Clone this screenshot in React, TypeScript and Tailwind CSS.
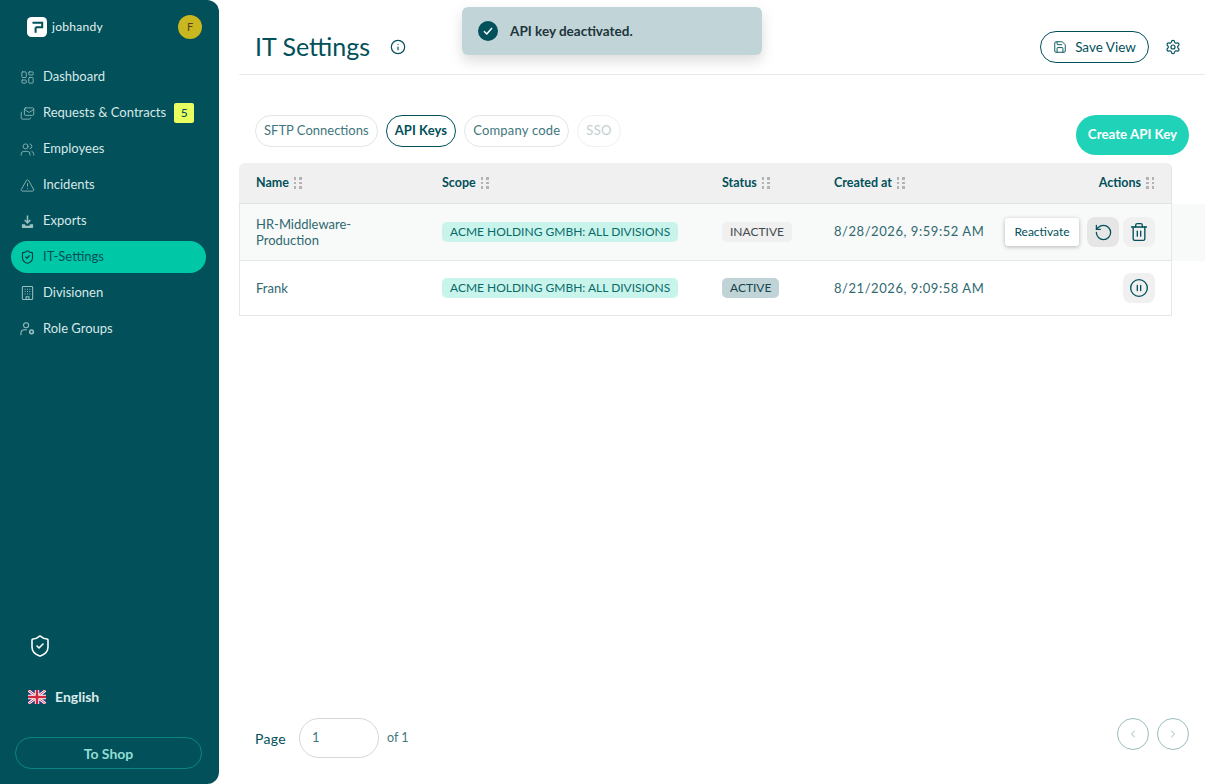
import { ReactNode } from "react";
import {
  ChevronLeft,
  ChevronRight,
  CirclePause,
  Info,
  LayoutDashboard,
  Mails,
  RotateCcw,
  Save,
  Settings,
  ShieldCheck,
  Trash2,
  TriangleAlert,
  Users,
} from "lucide-react";

function ExportIcon() {
  return (
    <svg width="15" height="15" viewBox="0 0 16 16" fill="none">
      <path d="M8 1.5v7.5M5 6.5 8 9.5l3-3" stroke="currentColor" strokeWidth="1.6" />
      <path d="M2 11h3.2l1 1.5h3.6l1-1.5H14v3.2a.8.8 0 0 1-.8.8H2.8a.8.8 0 0 1-.8-.8z" fill="currentColor" />
    </svg>
  );
}

function RoleIcon() {
  return (
    <svg width="16" height="16" viewBox="0 0 16 16" fill="none" stroke="currentColor" strokeWidth="1.1">
      <circle cx="6.5" cy="4" r="2.7" />
      <path d="M1 14v-1.5c0-2.2 1.8-3.7 4-3.7h2" strokeLinecap="round" />
      <circle cx="12.3" cy="11" r="2" strokeWidth="1.6" />
    </svg>
  );
}

function BuildingIcon() {
  return (
    <svg width="16" height="16" viewBox="0 0 16 16" fill="none" stroke="currentColor">
      <rect x="2.5" y="1" width="11" height="14" rx="1" strokeWidth="1.1" />
      <path
        d="M5 4h1M7.5 4h1M10 4h1M5 6.5h1M7.5 6.5h1M10 6.5h1M5 9h1M7.5 9h1M10 9h1"
        strokeWidth="1.1"
      />
      <path d="M6.5 15v-3h3v3" strokeWidth="1.1" />
    </svg>
  );
}

function Logo() {
  return (
    <svg width="20" height="20" viewBox="0 0 20 20" fill="none">
      <rect width="20" height="20" rx="4.5" fill="#fff" />
      <path d="M5.5 5.8H15.2V10.2H8.6M8.6 10.2V15.8" stroke="#01505a" strokeWidth="2" />
    </svg>
  );
}

function UkFlag() {
  return (
    <svg width="18" height="14" viewBox="0 0 18 14" className="shrink-0">
      <rect width="18" height="14" fill="#2b3a80" />
      <path d="M0 0 18 14M18 0 0 14" stroke="#fff" strokeWidth="2.6" />
      <path d="M0 0 18 14M18 0 0 14" stroke="#cf2a3f" strokeWidth="0.9" />
      <path d="M9 0v14M0 7h18" stroke="#fff" strokeWidth="4.4" />
      <path d="M9 0v14M0 7h18" stroke="#cf2a3f" strokeWidth="2.6" />
    </svg>
  );
}

function GripDots() {
  return (
    <span className="grid grid-cols-2 gap-x-[3px] gap-y-[2px]">
      {[0, 1, 2, 3, 4, 5].map((i) => (
        <span key={i} className="w-[2.5px] h-[2.5px] bg-[#b3b3b3]" />
      ))}
    </span>
  );
}

const navItems = [
  { label: "Dashboard", icon: <LayoutDashboard size={17} strokeWidth={1.3} /> },
  { label: "Requests & Contracts", icon: <Mails size={17} strokeWidth={1.3} />, badge: "5" },
  { label: "Employees", icon: <Users size={17} strokeWidth={1.3} /> },
  { label: "Incidents", icon: <TriangleAlert size={17} strokeWidth={1.3} /> },
  { label: "Exports", icon: <ExportIcon /> },
  { label: "IT-Settings", icon: <ShieldCheck size={16} strokeWidth={1.8} />, active: true },
  { label: "Divisionen", icon: <BuildingIcon /> },
  { label: "Role Groups", icon: <RoleIcon /> },
];

function Sidebar() {
  return (
    <aside className="w-[219px] h-[784px] shrink-0 bg-[#01505a] rounded-r-xl flex flex-col pb-[15px]">
      <div className="flex items-center justify-between pl-[27px] pr-[17px] pt-[15px] h-[24px] box-content">
        <div className="flex items-center gap-[5px]">
          <Logo />
          <span className="text-[12px] text-[#e6f0f0] tracking-[0.3px]">jobhandy</span>
        </div>
        <span className="w-6 h-6 rounded-full bg-[#c8b71f] text-[#5b3a1e] text-[11px] flex items-center justify-center">
          F
        </span>
      </div>
      <nav className="flex flex-col gap-1 px-[11px] pt-[22px]">
        {navItems.map((item) => (
          <div
            key={item.label}
            className={
              item.active
                ? "flex items-center h-8 rounded-full bg-[#00c7a6] pl-[9px] gap-[8px] w-[195px] whitespace-nowrap"
                : "flex items-center h-8 pl-[9px] gap-[8px] w-[195px] whitespace-nowrap"
            }
          >
            <span className={item.active ? "w-[15px] flex justify-center text-[#043c44]" : "w-[15px] flex justify-center text-[#9cc0c2]"}>
              {item.icon}
            </span>
            <span className={item.active ? "text-[13px] text-[#01505a]" : "text-[13px] text-[#d8e8e8]"}>{item.label}</span>
            {item.badge && (
              <span className="w-5 h-5 rounded-[2px] bg-[#e9ff5f] text-[#01505a] text-[12px] font-medium flex items-center justify-center">
                {item.badge}
              </span>
            )}
          </div>
        ))}
      </nav>
      <div className="mt-auto flex flex-col">
        <div className="pl-[28px]">
          <ShieldCheck size={24} strokeWidth={1.6} className="text-white" />
        </div>
        <div className="flex items-center gap-[9px] pl-[28px] mt-[28px]">
          <UkFlag />
          <span className="text-[14px] font-bold text-[#dcebeb]">English</span>
        </div>
        <div className="mx-[15px] mt-[30px] w-[187px] h-[32px] rounded-full border border-[#0a8585] flex items-center justify-center text-[14px] font-bold text-[#93ddd2]">
          To Shop
        </div>
      </div>
    </aside>
  );
}

function Tab({ children, state, className = "" }: { children: ReactNode; state?: "active" | "disabled"; className?: string }) {
  const cls =
    state === "active"
      ? "border-[#01505a] text-[#01505a] font-bold"
      : state === "disabled"
        ? "border-[#f0f0f0] text-[#bfd0d2]"
        : "border-[#e3e6e6] text-[#3f767d]";
  return <div className={"h-8 px-2 rounded-full border flex items-center text-[13px] " + cls + " " + className}>{children}</div>;
}

function HeadCell({ children, className }: { children: ReactNode; className: string }) {
  return (
    <div className={"flex items-center gap-[5px] text-[12.5px] font-bold text-[#01505a] " + className}>
      {children}
      <GripDots />
    </div>
  );
}

function Pill({ children, className }: { children: ReactNode; className: string }) {
  return (
    <span className={"flex items-center w-fit h-5 px-2 rounded-[5px] text-[12px] whitespace-nowrap " + className}>
      {children}
    </span>
  );
}

function IconButton({ children, className }: { children: ReactNode; className: string }) {
  return <button className={"w-8 h-[30px] rounded-lg flex items-center justify-center text-[#01505a] " + className}>{children}</button>;
}

function ApiTable() {
  return (
    <div className="w-[933px] mt-[8px]">
      <div className="flex items-center h-[41px] bg-[#f0f0f0] rounded-t-md border-b border-r border-[#e2e4e4] pl-[17px] pr-[17px]">
        <HeadCell className="w-[186px]">Name</HeadCell>
        <HeadCell className="w-[280px]">Scope</HeadCell>
        <HeadCell className="w-[112px]">Status</HeadCell>
        <HeadCell className="w-[120px]">Created at</HeadCell>
        <HeadCell className="flex-1 justify-end">Actions</HeadCell>
      </div>
      <div className="w-[966px] bg-[#f8faf9]">
        <div className="w-[933px] h-[57px] flex items-center px-[16px] border-x border-b border-[#e6e8e8]">
          <div className="w-[186px] text-[13px] leading-4 text-[#30686f] pr-[60px]">HR-Middleware-Production</div>
          <div className="w-[280px]">
            <Pill className="bg-[#c8f4ec] text-[#0a6a6a]">ACME HOLDING GMBH: ALL DIVISIONS</Pill>
          </div>
          <div className="w-[112px]">
            <Pill className="bg-[#f0f0f0] text-[#424b4b]">INACTIVE</Pill>
          </div>
          <div className="text-[13px] tracking-[0.55px] text-[#30686f] whitespace-nowrap">8/28/2026, 9:59:52 AM</div>
          <div className="flex items-center gap-1 ml-auto relative">
            <IconButton className="bg-[#e6e6e6]">
              <RotateCcw size={19} strokeWidth={1.6} />
            </IconButton>
            <IconButton className="bg-[#f0f0f0]">
              <Trash2 size={20} strokeWidth={1.6} />
            </IconButton>
            <div className="absolute right-[76px] top-[1px] h-7 w-[74px] rounded-[3px] bg-white shadow-[0_1px_4px_rgba(0,0,0,0.28)] text-[#01505a] text-[12px] flex items-center justify-center">
              Reactivate
            </div>
          </div>
        </div>
      </div>
      <div className="h-[55px] flex items-center px-[16px] border-x border-b border-[#e6e8e8]">
        <div className="w-[186px] pt-[1px] text-[13px] text-[#30686f]">Frank</div>
        <div className="w-[280px]">
          <Pill className="bg-[#c8f4ec] text-[#0a6a6a]">ACME HOLDING GMBH: ALL DIVISIONS</Pill>
        </div>
        <div className="w-[112px]">
          <Pill className="bg-[#c0d4d8] text-[#14454b]">ACTIVE</Pill>
        </div>
        <div className="pt-[1px] text-[13px] tracking-[0.55px] text-[#30686f] whitespace-nowrap">8/21/2026, 9:09:58 AM</div>
        <div className="ml-auto">
          <IconButton className="bg-[#f0f0f0]">
            <CirclePause size={20} strokeWidth={1.6} />
          </IconButton>
        </div>
      </div>
    </div>
  );
}

export default function App() {
  return (
    <div className="w-[1224px] h-[784px] flex bg-white overflow-hidden relative font-['Lato',sans-serif]">
      <Sidebar />
      <main className="flex-1 flex flex-col pl-[20px] pr-[19px] h-[784px]">
        <header className="h-[75px] shrink-0 border-b border-[#e9ebeb] flex items-center pl-[16px] pr-[24px] pt-[20px]">
          <h1 className="text-[25px] text-[#01505a] font-normal">IT Settings</h1>
          <Info size={16} strokeWidth={1.8} className="ml-[20px] text-[#01505a]" />
          <button className="ml-auto h-8 w-[109px] rounded-full border border-[#01505a] flex items-center justify-center gap-2 text-[13.5px] text-[#01505a]">
            <Save size={14} strokeWidth={1.6} />
            Save View
          </button>
          <Settings size={16} strokeWidth={1.8} className="ml-4 text-[#01505a]" />
        </header>
        <div className="flex items-start justify-between px-[16px] mt-[40px] h-[40px] shrink-0">
          <div className="flex gap-2">
            <Tab>SFTP Connections</Tab>
            <Tab state="active" className="tracking-[0.1px]">API Keys</Tab>
            <Tab className="tracking-[0.2px]">Company code</Tab>
            <Tab state="disabled" className="tracking-[0.3px]">SSO</Tab>
          </div>
          <button className="h-10 w-[113px] rounded-full bg-[#20d3b8] text-white text-[13.3px] font-bold flex items-center justify-center">
            Create API Key
          </button>
        </div>
        <ApiTable />
        <div className="mt-auto h-[66px] flex items-start px-[16px]">
          <span className="w-[32px] text-[14px] text-[#01505a] mt-[10px] tracking-[0.3px]">Page</span>
          <div className="ml-[12px] w-[80px] h-10 rounded-full border border-[#d4d8d8] flex items-center pl-[12px] text-[13px] text-[#3f767d]">
            1
          </div>
          <span className="ml-2 mt-[11px] text-[12.5px] text-[#3f767d]">of 1</span>
          <div className="ml-auto flex gap-2">
            <span className="w-8 h-8 rounded-full border border-[#9bbdc0] flex items-center justify-center text-[#9bbdc0]">
              <ChevronLeft size={12} />
            </span>
            <span className="w-8 h-8 rounded-full border border-[#9bbdc0] flex items-center justify-center text-[#9bbdc0]">
              <ChevronRight size={12} />
            </span>
          </div>
        </div>
      </main>
      <div className="absolute left-[462px] top-[7px] w-[300px] h-12 rounded-md bg-[#c1d5d9] shadow-[0_6px_14px_rgba(0,0,0,0.14)] flex items-center pl-[16px] gap-[12px]">
        <span className="w-5 h-5 rounded-full bg-[#01505a] flex items-center justify-center">
          <svg width="12" height="12" viewBox="0 0 12 12" fill="none" stroke="#fff" strokeWidth="1.5">
            <path d="M2 6.3 4.8 9 10 3" />
          </svg>
        </span>
        <span className="pt-[1px] text-[13.5px] font-bold text-[#20343a]">API key deactivated.</span>
      </div>
    </div>
  );
}
